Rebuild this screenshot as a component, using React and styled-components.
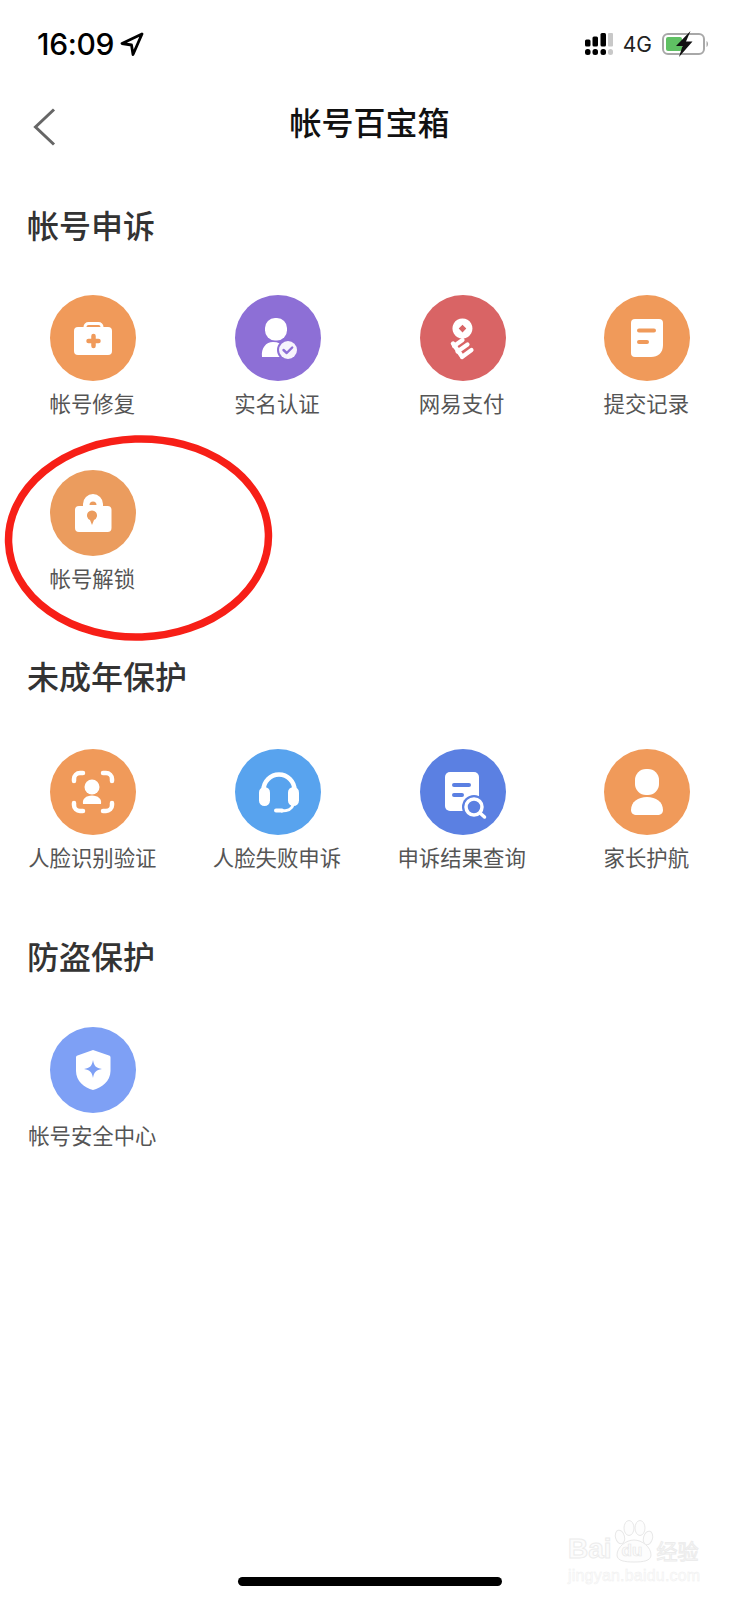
import React from "react";
import styled, { createGlobalStyle } from "styled-components";

const GlobalStyle = createGlobalStyle`
  html, body {
    margin: 0;
    padding: 0;
    background: #fff;
  }
  body {
    font-family: "Noto Sans CJK SC", "Liberation Sans", sans-serif;
  }
`;

const Page = styled.div`
  position: relative;
  width: 739px;
  height: 1600px;
  overflow: hidden;
  background: #fff;
`;

const StatusBar = styled.div`
  display: flex;
  align-items: center;
  justify-content: space-between;
  height: 44px;
  padding: 22px 29px 0 37px;
`;
const StatusLeft = styled.div`
  display: flex;
  align-items: center;
  gap: 6px;
`;
const Clock = styled.span`
  font-family: "Inter", "Liberation Sans", sans-serif;
  font-size: 30px;
  font-weight: 500;
  letter-spacing: -0.3px;
  color: #000;
`;
const StatusRight = styled.div`
  display: flex;
  align-items: center;
  gap: 10px;
`;
const Network = styled.span`
  font-family: "Inter", "Liberation Sans", sans-serif;
  font-size: 21px;
  color: #222;
`;

const NavBar = styled.div`
  position: relative;
  display: flex;
  align-items: center;
  justify-content: center;
  height: 60px;
  margin-top: 25px;
`;
const BackButton = styled.button`
  position: absolute;
  left: 33px;
  top: 17px;
  display: flex;
  padding: 0;
  border: 0;
  background: none;
`;
const PageTitle = styled.h1`
  margin: 0;
  font-size: 32px;
  font-weight: 500;
  line-height: 44px;
  color: #111;
`;

const Section = styled.section`
  margin-top: ${(p) => p.$top}px;
`;
const SectionTitle = styled.h2`
  margin: 0 0 ${(p) => p.$gap}px;
  padding-left: 27px;
  font-size: 32px;
  font-weight: 500;
  line-height: 40px;
  color: #333;
`;
const Grid = styled.div`
  display: grid;
  grid-template-columns: repeat(4, 184.67px);
  row-gap: 52px;
  padding-left: 1px;
`;
const Item = styled.div`
  display: flex;
  flex-direction: column;
  align-items: center;
  gap: 7px;
`;
const Badge = styled.div`
  width: 86px;
  height: 86px;
  border-radius: 50%;
  background: ${(p) => p.$color};
  color: ${(p) => p.$color};
`;
const Label = styled.span`
  margin-left: -2px;
  font-size: 21.4px;
  line-height: 30px;
  white-space: nowrap;
  color: #555;
`;

const HomeBar = styled.div`
  position: absolute;
  left: 238px;
  bottom: 14px;
  width: 264px;
  height: 9px;
  border-radius: 5px;
  background: #000;
`;
const Circled = styled.svg`
  position: absolute;
  left: 0;
  top: 425px;
  pointer-events: none;
`;

const Watermark = styled.div`
  position: absolute;
  left: 568px;
  top: 1520px;
  width: 135px;
  color: #fcfcfc;
  -webkit-text-stroke: 1px #ececec;
`;
const MarkTop = styled.div`
  display: flex;
  align-items: flex-end;
  height: 43px;
  font-family: "Liberation Sans", sans-serif;
  font-size: 28px;
  font-weight: 700;
  line-height: 28px;
`;
const Paw = styled.div`
  position: relative;
  flex: none;
  width: 40px;
  height: 43px;
  margin: 0 3px 0 2px;
`;
const PawText = styled.span`
  position: absolute;
  left: 8px;
  bottom: 2px;
  font-size: 17px;
  line-height: 20px;
  -webkit-text-stroke: 0.7px #e8e8e8;
`;
const MarkChinese = styled.span`
  font-family: "Noto Sans CJK SC", sans-serif;
  font-size: 21px;
  font-weight: 400;
  line-height: 26px;
`;
const MarkUrl = styled.div`
  margin-top: 4px;
  font-family: "Liberation Sans", sans-serif;
  font-size: 16px;
  line-height: 18px;
  letter-spacing: 0.2px;
  -webkit-text-stroke: 0.4px #eeeeee;
`;

const Glyph = ({ children }) => (
  <svg width="86" height="86" viewBox="0 0 86 86">
    {children}
  </svg>
);

const Kit = () => (
  <Glyph>
    <path d="M35 33v-1a3.500 3.500 0 0 1 3.500-3.500h10A3.500 3.500 0 0 1 52 32v1" fill="none" stroke="#fff" strokeWidth="3" />
    <rect x="24" y="32" width="38" height="28" rx="4" fill="#fff" />
    <path d="M38.500 46h10M43.500 41v10" stroke="currentColor" strokeWidth="4.500" strokeLinecap="round" />
  </Glyph>
);

const Verified = () => (
  <Glyph>
    <rect x="30" y="23" width="22" height="22.500" rx="10" fill="#fff" />
    <path d="M27 62c-1-9 4-15 11-15 5 0 9 2 12 5-3 3-4 7-3 10z" fill="#fff" />
    <circle cx="53" cy="55" r="11" fill="currentColor" />
    <circle cx="53" cy="55" r="9" fill="#fff" fillOpacity="0.92" />
    <path d="M48.500 55l3.200 3 5.500-5.500" fill="none" stroke="currentColor" strokeWidth="2.400" strokeLinecap="round" strokeLinejoin="round" />
  </Glyph>
);

const Pay = () => (
  <Glyph>
    <path fillRule="evenodd" fill="#fff" d="M42.500 23.500a10 10 0 1 1-.1 0zM42.500 29.800l-3.800 3.800 3.800 3.800 3.800-3.800z" />
    <path d="M34 51l8.500-6M37.500 56.500l10-7M42 62l9.500-7" fill="none" stroke="#fff" strokeWidth="4.200" strokeLinecap="round" />
    <path d="M33 48.500L42 61.500" fill="none" stroke="#fff" strokeWidth="4.500" strokeLinecap="round" />
  </Glyph>
);

const Note = () => (
  <Glyph>
    <path d="M31 24h24a4 4 0 0 1 4 4v22c0 8-5 12-12 12H31a4 4 0 0 1-4-4V28a4 4 0 0 1 4-4z" fill="#fff" />
    <path d="M35 35.500h15M35 47h8" stroke="currentColor" strokeWidth="4" strokeLinecap="round" />
  </Glyph>
);

const Lock = () => (
  <Glyph>
    <path fillRule="evenodd" fill="#fff" d="M33 36v-2a10 10 0 0 1 20 0v2h4.500a4 4 0 0 1 4 4v18a4 4 0 0 1-4 4H29a4 4 0 0 1-4-4V40a4 4 0 0 1 4-4zM39.500 35h7a3.500 3.500 0 0 0-7 0z" />
    <path d="M42 55l-2-5a5 5 0 1 1 4 0z" fill="currentColor" />
  </Glyph>
);

const Face = () => (
  <Glyph>
    <path d="M24 32v-2a6 6 0 0 1 6-6h3M53 24h3a6 6 0 0 1 6 6v2M62 54v2a6 6 0 0 1-6 6h-3M33 62h-3a6 6 0 0 1-6-6v-2" fill="none" stroke="#fff" strokeWidth="4.500" strokeLinecap="round" />
    <circle cx="42" cy="38" r="7.500" fill="#fff" />
    <path d="M33 55c-1-5 3-8.500 9-8.500s10 3.500 9 8.500z" fill="#fff" />
  </Glyph>
);

const Headset = () => (
  <Glyph>
    <path d="M28.500 41a15.500 15.500 0 0 1 31 0" fill="none" stroke="#fff" strokeWidth="4.500" />
    <rect x="24" y="38" width="11" height="19" rx="5.500" fill="#fff" />
    <rect x="53" y="38" width="11" height="19" rx="5.500" fill="#fff" />
    <path d="M58 56c-1 4-5 6-12 6" fill="none" stroke="#fff" strokeWidth="3" />
    <path d="M41 61.500h6" stroke="#fff" strokeWidth="4" strokeLinecap="round" />
  </Glyph>
);

const Search = () => (
  <Glyph>
    <rect x="25" y="23" width="34" height="39" rx="5" fill="#fff" />
    <path d="M34 36h15M34 46h8" stroke="currentColor" strokeWidth="4" strokeLinecap="round" />
    <circle cx="54" cy="58" r="12" fill="currentColor" />
    <circle cx="54" cy="58" r="8" fill="none" stroke="#fff" strokeWidth="3.500" />
    <path d="M60 64l4.500 4" stroke="#fff" strokeWidth="3.500" strokeLinecap="round" />
  </Glyph>
);

const Parent = () => (
  <Glyph>
    <rect x="31" y="20" width="24" height="26" rx="11" fill="#fff" />
    <path d="M33 66c-4 0-6-2-6-5 0-8 7-13 16-13s16 5 16 13c0 3-2 5-6 5z" fill="#fff" />
  </Glyph>
);

const Shield = () => (
  <Glyph>
    <path d="M43 23l16 5.500c1 0 1.500 1 1.500 2V44c0 10-9 17-17.500 19C34.500 61 26 54 26 44V30.500c0-1 .5-2 1.500-2z" fill="#fff" />
    <path d="M43 33c1 6 3 8 9 9-6 1-8 3-9 9-1-6-3-8-9-9 6-1 8-3 9-9z" fill="currentColor" />
  </Glyph>
);

const ORANGE = "#f09a5a";
const sections = [
  {
    title: "帐号申诉",
    top: 53,
    gap: 51,
    items: [
      ["帐号修复", ORANGE, Kit],
      ["实名认证", "#8d6fd6", Verified],
      ["网易支付", "#d96465", Pay],
      ["提交记录", ORANGE, Note],
      ["帐号解锁", "#eb9c5e", Lock],
    ],
  },
  {
    title: "未成年保护",
    top: 62,
    gap: 54,
    items: [
      ["人脸识别验证", ORANGE, Face],
      ["人脸失败申诉", "#58a3ee", Headset],
      ["申诉结果查询", "#5b80e2", Search],
      ["家长护航", ORANGE, Parent],
    ],
  },
  {
    title: "防盗保护",
    top: 63,
    gap: 52,
    items: [["帐号安全中心", "#7ea0f5", Shield]],
  },
];

export default function App() {
  return (
    <Page>
      <GlobalStyle />
      <StatusBar>
        <StatusLeft>
          <Clock>16:09</Clock>
          <svg width="24" height="24" viewBox="0 0 24 24">
            <path d="M22 2L2 11.500l9.500 1.500 1.500 9.500z" fill="none" stroke="#000" strokeWidth="2.800" strokeLinejoin="round" />
          </svg>
        </StatusLeft>
        <StatusRight>
          <svg width="28" height="22" viewBox="0 0 28 22">
            <g fill="#000">
              <rect x="0" y="6.500" width="5.500" height="7" rx="1.500" />
              <rect x="7.500" y="3.500" width="5.500" height="10" rx="1.500" />
              <rect x="15.500" y="0" width="5.500" height="13.500" rx="1.500" />
              <rect x="0" y="16" width="5.500" height="6" rx="2.500" />
              <rect x="7.500" y="16" width="5.500" height="6" rx="2.500" />
              <rect x="15.500" y="16" width="5.500" height="6" rx="2.500" />
            </g>
            <g fill="#c8c8c8">
              <rect x="23" y="0" width="5" height="13.500" rx="1" />
              <rect x="23" y="16" width="5" height="6" rx="2.500" />
            </g>
          </svg>
          <Network>4G</Network>
          <svg width="48" height="26" viewBox="0 0 48 26">
            <rect x="1" y="3" width="41" height="20" rx="5" fill="#fff" stroke="#a8a8a8" strokeWidth="2" />
            <rect x="4" y="6" width="16" height="14" rx="2" fill="#5fc063" />
            <path d="M44.500 10c2 1 2 5 0 6z" fill="#a8a8a8" />
            <path d="M28.500 0L14 15h6.500L17 26l13.500-15.500H24z" fill="#111" />
          </svg>
        </StatusRight>
      </StatusBar>

      <NavBar>
        <BackButton aria-label="back">
          <svg width="24" height="38" viewBox="0 0 24 38">
            <path d="M21 1.500L2.500 19 21 36.500" fill="none" stroke="#666" strokeWidth="3" />
          </svg>
        </BackButton>
        <PageTitle>帐号百宝箱</PageTitle>
      </NavBar>

      {sections.map((s) => (
        <Section key={s.title} $top={s.top}>
          <SectionTitle $gap={s.gap}>{s.title}</SectionTitle>
          <Grid>
            {s.items.map(([label, color, Icon]) => (
              <Item key={label}>
                <Badge $color={color}>
                  <Icon />
                </Badge>
                <Label>{label}</Label>
              </Item>
            ))}
          </Grid>
        </Section>
      ))}

      <Circled width="280" height="225" viewBox="0 0 280 225">
        <ellipse cx="138.500" cy="113" rx="130" ry="99" fill="none" stroke="#f71f17" strokeWidth="7.500" transform="rotate(-2 138.500 113)" />
      </Circled>

      <Watermark>
        <MarkTop>
          Bai
          <Paw>
            <svg width="40" height="43" viewBox="0 0 40 43">
              <g fill="#fdfdfd" stroke="#e8e8e8" strokeWidth="1">
                <ellipse cx="6" cy="17" rx="4.500" ry="7" transform="rotate(-15 6 17)" />
                <ellipse cx="15" cy="8" rx="5" ry="7.500" />
                <ellipse cx="26" cy="8" rx="5" ry="7.500" />
                <ellipse cx="34" cy="18" rx="4.500" ry="7" transform="rotate(15 34 18)" />
                <path d="M20 20c8 0 17 7 17 15 0 6-8 7-17 7S3 41 3 35c0-8 9-15 17-15z" />
              </g>
            </svg>
            <PawText>du</PawText>
          </Paw>
          <MarkChinese>经验</MarkChinese>
        </MarkTop>
        <MarkUrl>jingyan.baidu.com</MarkUrl>
      </Watermark>

      <HomeBar />
    </Page>
  );
}
